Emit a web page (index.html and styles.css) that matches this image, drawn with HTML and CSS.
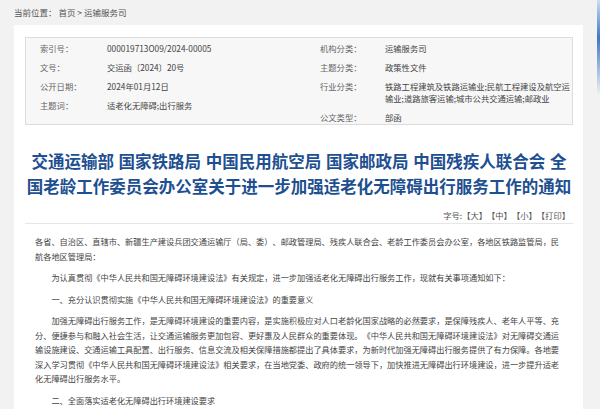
FILE: index.html
```html
<!DOCTYPE html>
<html lang="zh-CN">
<head>
<meta charset="utf-8">
<title>通知</title>
<link rel="stylesheet" href="styles.css">
</head>
<body>
<div class="crumb">当前位置： <a>首页</a> &gt; <a>运输服务司</a></div>
<div class="panel">
  <div class="meta">
    <div class="col col-left">
      <div class="row"><span class="lab">索引号：</span><span class="val">000019713O09/2024-00005</span></div>
      <div class="row"><span class="lab">文号：</span><span class="val">交运函〔2024〕20号</span></div>
      <div class="row"><span class="lab">公开日期：</span><span class="val">2024年01月12日</span></div>
      <div class="row"><span class="lab">主题词：</span><span class="val">适老化无障碍;出行服务</span></div>
    </div>
    <div class="col col-right">
      <div class="row"><span class="lab">机构分类：</span><span class="val">运输服务司</span></div>
      <div class="row"><span class="lab">主题分类：</span><span class="val">政策性文件</span></div>
      <div class="row"><span class="lab">行业分类：</span><span class="val">铁路工程建筑及铁路运输业;民航工程建设及航空运输业;道路旅客运输;城市公共交通运输;邮政业</span></div>
      <div class="row"><span class="lab">公文类型：</span><span class="val">部函</span></div>
    </div>
  </div>
  <h1 class="title">交通运输部 国家铁路局 中国民用航空局 国家邮政局 中国残疾人联合会 全国老龄工作委员会办公室关于进一步加强适老化无障碍出行服务工作的通知</h1>
  <div class="tools">字号:【大】【中】【小】【打印】</div>
  <div class="content">
    <p class="noindent">各省、自治区、直辖市、新疆生产建设兵团交通运输厅（局、委）、邮政管理局、残疾人联合会、老龄工作委员会办公室，各地区铁路监管局，民航各地区管理局：</p>
    <p>为认真贯彻《中华人民共和国无障碍环境建设法》有关规定，进一步加强适老化无障碍出行服务工作，现就有关事项通知如下：</p>
    <p>一、充分认识贯彻实施《中华人民共和国无障碍环境建设法》的重要意义</p>
    <p>加强无障碍出行服务工作，是无障碍环境建设的重要内容，是实施积极应对人口老龄化国家战略的必然要求，是保障残疾人、老年人平等、充分、便捷参与和融入社会生活，让交通运输服务更加包容、更好惠及人民群众的重要体现。《中华人民共和国无障碍环境建设法》对无障碍交通运输设施建设、交通运输工具配置、出行服务、信息交流及相关保障措施都提出了具体要求，为新时代加强无障碍出行服务提供了有力保障。各地要深入学习贯彻《中华人民共和国无障碍环境建设法》相关要求，在当地党委、政府的统一领导下，加快推进无障碍出行环境建设，进一步提升适老化无障碍出行服务水平。</p>
    <p>二、全面落实适老化无障碍出行环境建设要求</p>
  </div>
</div>
<div class="edge"></div>
</body>
</html>
```
FILE: styles.css
```css
html, body {
  margin: 0;
  padding: 0;
  background: #f2f2f2;
  font-family: "Noto Sans CJK SC", "Microsoft YaHei", sans-serif;
  color: #444;
  overflow: hidden;
  text-spacing-trim: space-all;
}
.crumb {
  height: 25px;
  line-height: 24px;
  padding-left: 14px;
  font-size: 8.5px;
  color: #555;
}
.crumb a {
  color: #555;
}
.panel {
  width: 569px;
  margin-left: 14px;
  background: #fff;
  padding: 12px 10px 0 11px;
  box-sizing: border-box;
  height: 384px;
  overflow: hidden;
}
.meta {
  display: flex;
  border: 1px solid #dcdcdc;
  background: #f7f7f7;
  height: 88px;
  box-sizing: border-box;
  font-size: 8.3px;
  line-height: 12px;
}
.col-left {
  width: 282px;
  padding-left: 14px;
}
.col-right {
  width: 252px;
}
.row {
  display: flex;
  padding: 3.5px 0;
}
.col-left .lab {
  width: 67px;
  flex: none;
  color: #666;
}
.col-right .lab {
  width: 65px;
  flex: none;
  color: #666;
}
.val {
  color: #444;
}
.col-right .val {
  width: 187px;
}
.title {
  margin: 24px 0 0;
  font-size: 16.5px;
  line-height: 25px;
  font-weight: bold;
  color: #1d4f91;
  text-align: center;
  word-spacing: 1px;
}
.tools {
  margin-top: 10px;
  text-align: right;
  font-size: 8.3px;
  line-height: 12px;
  color: #555;
  padding: 0 3px 2px 0;
  border-bottom: 1px solid #e6e6e6;
}
.content {
  padding: 10px 0 0 10px;
  width: 528px;
  font-size: 8.2px;
  line-height: 14.5px;
  color: #444;
}
.content p {
  margin: 0 0 7px;
  text-indent: 2em;
}
.content p.noindent {
  text-indent: 0;
}
.edge {
  position: absolute;
  top: 0;
  right: 0;
  width: 3px;
  height: 95px;
  background: linear-gradient(#cfdcee, #3f78c4 40%, rgba(63, 120, 196, 0));
}
```
